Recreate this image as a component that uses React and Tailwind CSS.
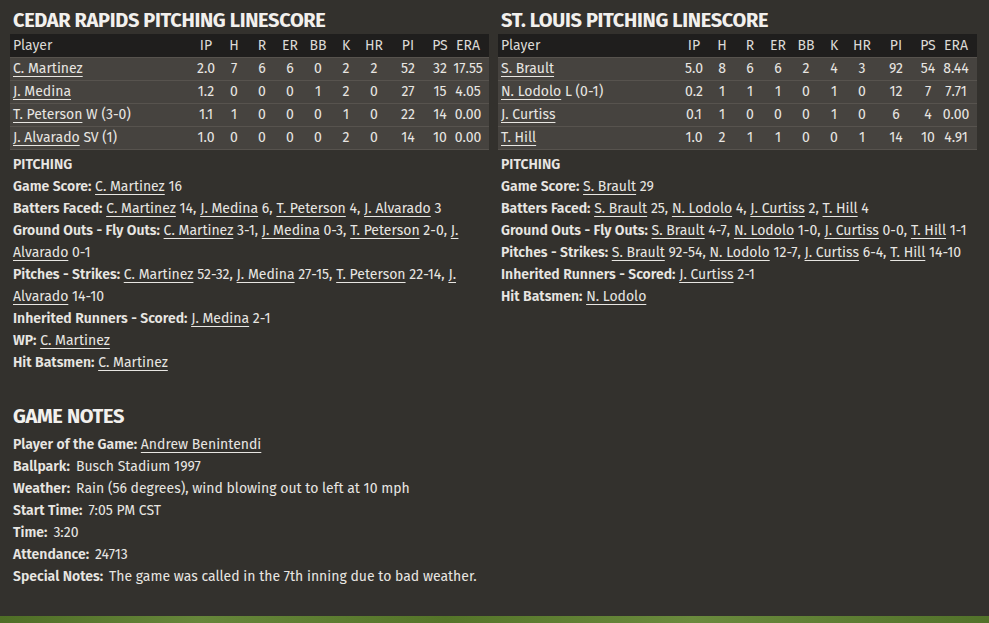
const left = {
  title: 'CEDAR RAPIDS PITCHING LINESCORE',
  rows: [
    ['C. Martinez', '', ['2.0', '7', '6', '6', '0', '2', '2', '52', '32', '17.55']],
    ['J. Medina', '', ['1.2', '0', '0', '0', '1', '2', '0', '27', '15', '4.05']],
    ['T. Peterson', 'W (3-0)', ['1.1', '1', '0', '0', '0', '1', '0', '22', '14', '0.00']],
    ['J. Alvarado', 'SV (1)', ['1.0', '0', '0', '0', '0', '2', '0', '14', '10', '0.00']],
  ],
  pitching: [
    ['Game Score:', [['C. Martinez', '16']]],
    ['Batters Faced:', [['C. Martinez', '14'], ['J. Medina', '6'], ['T. Peterson', '4'], ['J. Alvarado', '3']]],
    ['Ground Outs - Fly Outs:', [['C. Martinez', '3-1'], ['J. Medina', '0-3'], ['T. Peterson', '2-0'], ['J. Alvarado', '0-1']]],
    ['Pitches - Strikes:', [['C. Martinez', '52-32'], ['J. Medina', '27-15'], ['T. Peterson', '22-14'], ['J. Alvarado', '14-10']]],
    ['Inherited Runners - Scored:', [['J. Medina', '2-1']]],
    ['WP:', [['C. Martinez', '']]],
    ['Hit Batsmen:', [['C. Martinez', '']]],
  ],
};

const right = {
  title: 'ST. LOUIS PITCHING LINESCORE',
  rows: [
    ['S. Brault', '', ['5.0', '8', '6', '6', '2', '4', '3', '92', '54', '8.44']],
    ['N. Lodolo', 'L (0-1)', ['0.2', '1', '1', '1', '0', '1', '0', '12', '7', '7.71']],
    ['J. Curtiss', '', ['0.1', '1', '0', '0', '0', '1', '0', '6', '4', '0.00']],
    ['T. Hill', '', ['1.0', '2', '1', '1', '0', '0', '1', '14', '10', '4.91']],
  ],
  pitching: [
    ['Game Score:', [['S. Brault', '29']]],
    ['Batters Faced:', [['S. Brault', '25'], ['N. Lodolo', '4'], ['J. Curtiss', '2'], ['T. Hill', '4']]],
    ['Ground Outs - Fly Outs:', [['S. Brault', '4-7'], ['N. Lodolo', '1-0'], ['J. Curtiss', '0-0'], ['T. Hill', '1-1']]],
    ['Pitches - Strikes:', [['S. Brault', '92-54'], ['N. Lodolo', '12-7'], ['J. Curtiss', '6-4'], ['T. Hill', '14-10']]],
    ['Inherited Runners - Scored:', [['J. Curtiss', '2-1']]],
    ['Hit Batsmen:', [['N. Lodolo', '']]],
  ],
};

const cols = [
  ['IP', 'w-[28px]'],
  ['H', 'w-[28px]'],
  ['R', 'w-[28px]'],
  ['ER', 'w-[28px]'],
  ['BB', 'w-[28px]'],
  ['K', 'w-[28px]'],
  ['HR', 'w-[28px]'],
  ['PI', 'w-[40px]'],
  ['PS', 'w-[24px]'],
  ['ERA', 'w-[32px]'],
];

const linkCls = 'underline underline-offset-[3px] decoration-1';

function Table({ rows }) {
  return (
    <div className="w-[479px] border-b border-[#57534e]">
      <div className="flex h-[23px] items-center bg-[#1f1e1d] pr-[5px] leading-[23px] text-[#dcdad6]">
        <div className="flex-1 pl-[3px]">Player</div>
        {cols.map(([c, w]) => (
          <div key={c} className={`${w} text-center`}>{c}</div>
        ))}
      </div>
      {rows.map(([name, note, vals]) => (
        <div key={name} className="flex h-[23px] items-center border-t border-[#57534e] bg-[#46433f] pr-[5px] leading-[22px]">
          <div className="flex-1 whitespace-nowrap pl-[3px]">
            <a className={linkCls}>{name}</a>
            {note ? ' ' + note : ''}
          </div>
          {vals.map((v, i) => (
            <div key={i} className={`${cols[i][1]} text-center whitespace-nowrap`}>{v}</div>
          ))}
        </div>
      ))}
    </div>
  );
}

function Pitching({ items }) {
  return (
    <div className="mt-[4px] pl-[3px] pr-[2px] leading-[22px]">
      <div className="font-semibold">PITCHING</div>
      {items.map(([label, parts]) => (
        <div key={label}>
          <span className="font-semibold">{label}</span>{' '}
          {parts.map(([name, val], i) => (
            <span key={i}>
              <a className={linkCls}>{name}</a>
              {val ? ' ' + val : ''}
              {i < parts.length - 1 ? ', ' : ''}
            </span>
          ))}
        </div>
      ))}
    </div>
  );
}

function Section({ data }) {
  return (
    <div className="flex flex-col">
      <h2 className="pl-[3px] text-[20px] font-bold uppercase leading-[24px] tracking-[-0.35px] text-[#f2f0ed]">{data.title}</h2>
      <div className="mt-[2px]">
        <Table rows={data.rows} />
      </div>
      <Pitching items={data.pitching} />
    </div>
  );
}

const notes = [
  ['Ballpark:', 'Busch Stadium 1997'],
  ['Weather:', 'Rain (56 degrees), wind blowing out to left at 10 mph'],
  ['Start Time:', '7:05 PM CST'],
  ['Time:', '3:20'],
  ['Attendance:', '24713'],
  ['Special Notes:', 'The game was called in the 7th inning due to bad weather.'],
];

export default function App() {
  return (
    <div className="flex h-[623px] w-[989px] flex-col overflow-hidden bg-[#33312d] font-['Fira_Sans',Roboto,sans-serif] text-[14px] text-[#e8e6e2]">
      <div className="flex-1 pl-[10px] pt-[8px]">
        <div className="grid grid-cols-[479px_479px] gap-x-[9px]">
          <Section data={left} />
          <Section data={right} />
        </div>
        <div className="mt-[30px] pl-[3px]">
          <h2 className="text-[20px] font-bold uppercase leading-[24px] tracking-[-0.35px] text-[#f2f0ed]">Game Notes</h2>
          <div className="mt-[6px] leading-[22px]">
            <div>
              <span className="font-semibold">Player of the Game:</span>{' '}
              <a className={linkCls}>Andrew Benintendi</a>
            </div>
            {notes.map(([l, v]) => (
              <div key={l}>
                <span className="font-semibold">{l}</span>
                <span className="ml-[6px]">{v}</span>
              </div>
            ))}
          </div>
        </div>
      </div>
      <div className="h-[7px] bg-[linear-gradient(90deg,#4f6e26,#66863a_20%,#557529_45%,#6a8a3d_70%,#52722a)]" />
    </div>
  );
}
